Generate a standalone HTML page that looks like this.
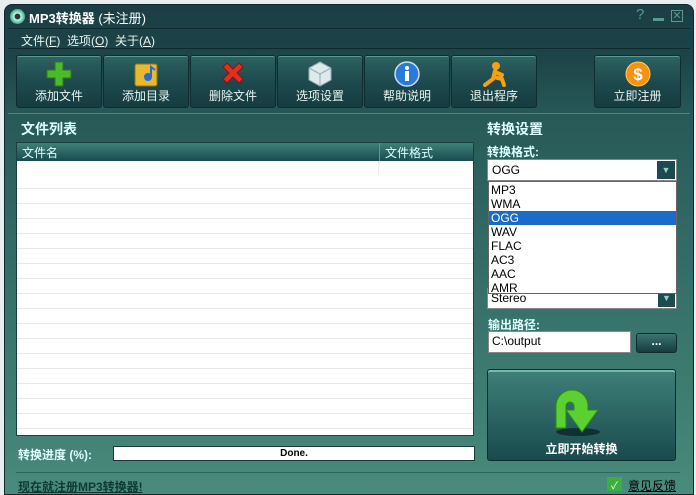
<!DOCTYPE html>
<html><head><meta charset="utf-8"><style>
*{margin:0;padding:0;box-sizing:border-box}
body{width:696px;height:495px;overflow:hidden;background:#e8eef0;font-family:"Liberation Sans","Noto Sans CJK SC",sans-serif;font-size:12px;position:relative}
.win{position:absolute;left:4px;top:4px;width:690px;height:491px;border-radius:8px 8px 0 0;background:linear-gradient(#1a3e44 0,#1d4448 50px,#285a58 115px,#336c66 250px,#3f7e72 400px,#4a8c7e 495px);border:1px solid #0e2a2c}
.a{position:absolute}
.t{color:#fff}
.btn{position:absolute;top:55px;height:53px;border:1px solid #0f2c30;border-radius:3px;background:linear-gradient(#2e6260,#1d4a4e 50%,#163c40);box-shadow:inset 0 1px 0 #5a9a90;color:#e8f4f0;text-align:center;font-size:12px}
.btn span{position:absolute;left:0;right:0;bottom:3px}
.btn svg{position:absolute;left:50%;margin-left:-13px;top:5px}
.hdr{color:#dff;font-weight:bold;font-size:14px}
.lbl{color:#dff;font-weight:bold;font-size:12px}
.item{height:14px;line-height:14px;padding-left:2px;font-size:12px;color:#000}
</style></head><body>
<div class="win"></div>
<div class="a" style="left:10px;top:9px;width:15px;height:15px;border-radius:50%;background:radial-gradient(#333 25%,#bfe 30%,#4a8 70%,#fff 75%)"></div>
<div class="a t" style="left:29px;top:8px;font-size:13px;font-weight:bold">MP3转换器 <span style="font-weight:normal">(未注册)</span></div>
<div class="a" style="left:636px;top:6px;color:#5a9a8e;font-size:15px">?</div>
<div class="a" style="left:653px;top:18px;width:11px;height:3px;background:#5a9a8e"></div>
<div class="a" style="left:671px;top:10px;width:12px;height:12px;border:1px solid #5a9a8e;color:#5a9a8e;font-size:11px;line-height:10px;text-align:center">✕</div>
<div class="a" style="left:8px;top:28px;width:682px;height:1px;background:#0e2a2c"></div>
<div class="a" style="left:21px;top:32px;color:#e8f4f0;font-size:12px">文件(<u>F</u>)&nbsp; 选项(<u>O</u>)&nbsp; 关于(<u>A</u>)</div>
<div class="a" style="left:8px;top:48px;width:682px;height:1px;background:#0e2a2c"></div>
<div class="btn" style="left:16px;width:86px"><svg width="26" height="26"><path d="M9 1h8v8h8v8h-8v8h-8v-8h-8v-8h8z" fill="#4cb82c" stroke="#2a7a18"/></svg><span>添加文件</span></div>
<div class="btn" style="left:103px;width:86px"><svg width="26" height="26"><rect x="2" y="3" width="22" height="22" rx="2" fill="#e8b830" stroke="#a07010"/><circle cx="15" cy="16" r="4" fill="#2a6ad0"/><path d="M18 16V6l4 3" stroke="#2a6ad0" stroke-width="2" fill="none"/></svg><span>添加目录</span></div>
<div class="btn" style="left:190px;width:86px"><svg width="26" height="26"><path d="M3 6l4-4 6 6 6-6 4 4-6 6 6 6-4 4-6-6-6 6-4-4 6-6z" fill="#e03020" stroke="#901010"/></svg><span>删除文件</span></div>
<div class="btn" style="left:277px;width:86px"><svg width="26" height="26"><path d="M13 1l11 6v12l-11 6-11-6V7z" fill="#dfe8ea" stroke="#9ab"/><path d="M2 7l11 6 11-6M13 13v12" stroke="#9ab" fill="none"/></svg><span>选项设置</span></div>
<div class="btn" style="left:364px;width:86px"><svg width="26" height="26"><circle cx="13" cy="13" r="12" fill="#2a7ad8" stroke="#cde" stroke-width="1.5"/><rect x="11" y="10" width="4" height="10" fill="#fff"/><circle cx="13" cy="7" r="2" fill="#fff"/></svg><span>帮助说明</span></div>
<div class="btn" style="left:451px;width:86px"><svg width="26" height="26"><circle cx="15" cy="5" r="4" fill="#f8a010"/><path d="M14 10l-2 8-8 6M13 16l8 2 2 6M14 11l7 3" stroke="#f8a010" stroke-width="4" fill="none" stroke-linecap="round"/></svg><span>退出程序</span></div>
<div class="btn" style="left:594px;width:87px"><svg width="26" height="26"><circle cx="13" cy="13" r="12" fill="#f89010" stroke="#fc6"/><text x="13" y="19" font-size="17" font-weight="bold" fill="#fff" text-anchor="middle" font-family="Liberation Sans">$</text></svg><span>立即注册</span></div>
<div class="a" style="left:8px;top:113px;width:682px;height:1px;background:#4a8a80"></div>
<div class="a hdr" style="left:21px;top:119px">文件列表</div>
<div class="a" style="left:16px;top:142px;width:458px;height:294px;background:#fff;border:1px solid #1a4044;overflow:hidden">
<div style="height:18px;background:linear-gradient(#3e8078,#1a4a4e);color:#dff;position:relative">
<span style="position:absolute;left:5px;top:1px">文件名</span>
<span style="position:absolute;left:362px;top:0;width:1px;height:18px;background:#5a9a90"></span>
<span style="position:absolute;left:368px;top:1px">文件格式</span></div>
<div style="position:absolute;left:361px;top:18px;width:1px;height:280px;background:#eee"></div>
<div style="position:absolute;left:0;right:0;top:31px;height:270px;background:repeating-linear-gradient(#fff 0,#fff 14px,#e8e8e8 14px,#e8e8e8 15px)"></div>
</div>
<div class="a lbl" style="left:18px;top:446px">转换进度 (%):</div>
<div class="a" style="left:113px;top:446px;width:362px;height:15px;background:#fff;border:1px solid #1a3a3a;text-align:center;font-size:10px;font-weight:bold;line-height:13px">Done.</div>
<div class="a" style="left:16px;top:472px;width:664px;height:1px;background:#2c6460"></div>
<div class="a" style="left:18px;top:478px;color:#0e3a34;font-weight:bold;text-decoration:underline;font-size:12px">现在就注册MP3转换器!</div>
<div class="a hdr" style="left:487px;top:119px">转换设置</div>
<div class="a lbl" style="left:487px;top:143px">转换格式:</div>
<div class="a" style="left:487px;top:159px;width:190px;height:22px;background:#fff;border:1px solid #888"><span style="position:absolute;left:4px;top:3px">OGG</span><div style="position:absolute;right:1px;top:1px;width:18px;height:18px;background:#1d4a4e;color:#9cc;font-size:9px;text-align:center;line-height:18px">▼</div></div>
<div class="a" style="left:487px;top:288px;width:190px;height:21px;background:#fff;border:1px solid #888"><span style="position:absolute;left:3px;top:2px">Stereo</span><div style="position:absolute;right:1px;top:1px;width:17px;height:17px;background:#1d4a4e;color:#9cc;font-size:9px;text-align:center;line-height:17px">▼</div></div>
<div class="a" style="left:488px;top:181px;width:189px;height:113px;background:#fff;border:1px solid #666;padding-top:1px">
<div class="item">MP3</div><div class="item">WMA</div><div class="item" style="background:#1a6cc8;color:#fff">OGG</div><div class="item">WAV</div><div class="item">FLAC</div><div class="item">AC3</div><div class="item">AAC</div><div class="item">AMR</div></div>
<div class="a lbl" style="left:488px;top:316px">输出路径:</div>
<div class="a" style="left:488px;top:331px;width:143px;height:22px;background:#fff;border:1px solid #888;padding:2px 3px">C:\output</div>
<div class="a" style="left:636px;top:333px;width:41px;height:20px;border:1px solid #0f2c30;border-radius:3px;background:linear-gradient(#3a7470,#163c40);color:#fff;text-align:center;line-height:14px;font-weight:bold">...</div>
<div class="a" style="left:487px;top:369px;width:189px;height:92px;border:1px solid #0f2c30;border-radius:3px;background:linear-gradient(#3e8078,#1a4a4e);box-shadow:inset 0 2px 0 #7ab8ac">
<svg width="60" height="60" style="position:absolute;left:60px;top:8px"><ellipse cx="30" cy="54" rx="22" ry="4" fill="#103032"/><path d="M8 50V28a16 16 0 0 1 32 0v4h10L34 54 18 32h8v-4a4 4 0 0 0-8 0v22z" fill="#5cd030" stroke="#2a8a18"/></svg>
<div style="position:absolute;left:0;right:0;top:70px;text-align:center;color:#fff;font-weight:bold">立即开始转换</div></div>
<div class="a" style="left:607px;top:477px;width:15px;height:14px;background:#3ab040;color:#fff;font-size:10px;text-align:center">✓</div>
<div class="a" style="left:628px;top:477px;color:#000;text-decoration:underline">意见反馈</div>
</body></html>
